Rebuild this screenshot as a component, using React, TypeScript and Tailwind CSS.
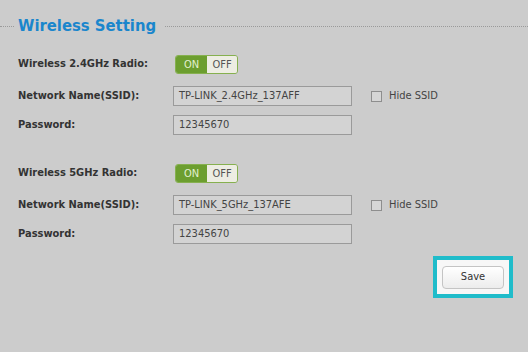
import React from "react";

const font = { fontFamily: '"DejaVu Sans Condensed", "DejaVu Sans", Verdana, sans-serif' };

function Toggle() {
  return (
    <div className="flex h-[19px] w-[63px] rounded-[3px] border border-[#86b04f] overflow-hidden text-[11px] leading-none">
      <div className="flex w-[31px] items-center justify-center bg-[#6c9e2f] text-[#e2f0d0]">ON</div>
      <div className="flex flex-1 items-center justify-center bg-[#ededE3] text-[#555]">OFF</div>
    </div>
  );
}

function Input({ value }: { value: string }) {
  return (
    <div className="flex h-[20px] w-[179px] items-center border border-[#9a9a9a] bg-[#d3d3d3] pl-[5px] text-[11px] text-[#444]">
      {value}
    </div>
  );
}

function Label({ children }: { children: React.ReactNode }) {
  return <div className="w-[155px] text-[11px] font-bold text-[#333]">{children}</div>;
}

function HideSsid() {
  return (
    <div className="ml-[19px] flex items-center">
      <div className="h-[11px] w-[11px] border border-[#8e8e8e] bg-[#d6d6d6]" />
      <span className="ml-[7px] text-[11px] text-[#444]">Hide SSID</span>
    </div>
  );
}

function Section({ band, ssid }: { band: string; ssid: string }) {
  return (
    <div className="flex flex-col">
      <div className="flex h-[19px] items-center">
        <Label>{`Wireless ${band} Radio:`}</Label>
        <div className="ml-[2px]">
          <Toggle />
        </div>
      </div>
      <div className="mt-[12px] flex h-[20px] items-center">
        <Label>Network Name(SSID):</Label>
        <Input value={ssid} />
        <HideSsid />
      </div>
      <div className="mt-[9px] flex h-[20px] items-center">
        <Label>Password:</Label>
        <Input value="12345670" />
      </div>
    </div>
  );
}

export default function App() {
  return (
    <div className="relative h-[352px] w-[528px] overflow-hidden bg-[#cccccc]" style={font}>
      <div className="flex h-[22px] items-center mt-[15px]">
        <div className="w-[14px] border-t border-dotted border-[#9a9a9a]" />
        <div className="px-[4px] text-[16.5px] font-bold leading-none text-[#1a86cc]">Wireless Setting</div>
        <div className="ml-[5px] flex-1 border-t border-dotted border-[#9a9a9a]" />
      </div>
      <div className="ml-[18px] mt-[18px] flex flex-col">
        <Section band="2.4GHz" ssid="TP-LINK_2.4GHz_137AFF" />
        <div className="h-[29px]" />
        <Section band="5GHz" ssid="TP-LINK_5GHz_137AFE" />
      </div>
      <div className="mt-[12px] flex justify-end pr-[15px]">
        <div className="flex h-[42px] w-[80px] items-center justify-center border-[4px] border-[#1fbcca] bg-[#f7f7f7]">
          <button className="h-[23px] w-[62px] rounded-[4px] border border-[#c4c4c4] bg-gradient-to-b from-white to-[#ececec] text-[11px] text-[#333]">
            Save
          </button>
        </div>
      </div>
    </div>
  );
}
